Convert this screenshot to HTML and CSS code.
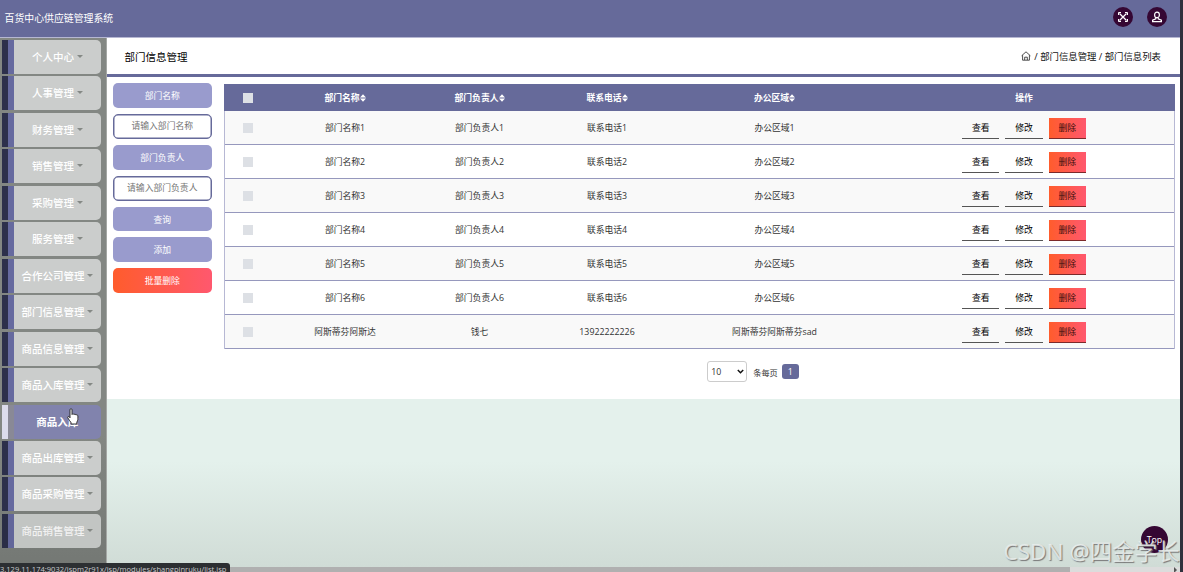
FILE: index.html
```html
<!DOCTYPE html>
<html lang="zh-CN">
<head>
<meta charset="utf-8">
<title>百货中心供应链管理系统</title>
<link rel="stylesheet" href="styles.css">
</head>
<body>
<svg width="0" height="0" class="defs">
  <symbol id="sort" viewBox="0 0 6 8"><path d="M3 .3 6 3.500H0zM3 7.700 0 4.500h6z" fill="#fff"/></symbol>
</svg>
<div class="window">
  <header class="topbar">
    <span class="brand">百货中心供应链管理系统</span>
    <div class="tools">
      <span class="round"><svg width="12" height="12" viewBox="0 0 12 12" fill="none" stroke="#fff" stroke-width="1.300"><path d="M2.500 2.500l7 7M9.500 2.500l-7 7"/><path d="M1.500 4V1.500H4M8 1.500h2.500V4M10.500 8v2.500H8M4 10.500H1.500V8" stroke-width="1"/></svg></span>
      <span class="round"><svg width="12" height="12" viewBox="0 0 12 12" fill="none" stroke="#fff" stroke-width="1.200"><ellipse cx="6" cy="3.900" rx="2.400" ry="2.800"/><path d="M4.800 6.500v1.300L1.600 9.200v1.400h8.800V9.200L7.200 7.800V6.500"/></svg></span>
    </div>
  </header>
  <div class="body">
    <nav class="sidebar">
      <a class="item"><span>个人中心</span><i class="caret"></i></a>
      <a class="item"><span>人事管理</span><i class="caret"></i></a>
      <a class="item"><span>财务管理</span><i class="caret"></i></a>
      <a class="item"><span>销售管理</span><i class="caret"></i></a>
      <a class="item"><span>采购管理</span><i class="caret"></i></a>
      <a class="item"><span>服务管理</span><i class="caret"></i></a>
      <a class="item"><span>合作公司管理</span><i class="caret"></i></a>
      <a class="item"><span>部门信息管理</span><i class="caret"></i></a>
      <a class="item"><span>商品信息管理</span><i class="caret"></i></a>
      <a class="item"><span>商品入库管理</span><i class="caret"></i></a>
      <a class="item active"><span>商品入库</span></a>
      <a class="item"><span>商品出库管理</span><i class="caret"></i></a>
      <a class="item"><span>商品采购管理</span><i class="caret"></i></a>
      <a class="item"><span>商品销售管理</span><i class="caret"></i></a>
    </nav>
    <main class="main">
      <div class="titlebar">
        <h1>部门信息管理</h1>
        <div class="crumbs"><svg width="10" height="10" viewBox="0 0 10 10" fill="none" stroke="#222" stroke-width=".8"><path d="M.6 4.8 5 .8l4.4 4M1.6 4.2v5h6.8v-5M3.7 9V6.2h2.6V9"/></svg><span>/ 部门信息管理 / 部门信息列表</span></div>
      </div>
      <div class="panel">
        <form class="filters">
          <label class="btn">部门名称</label>
          <input class="field" placeholder="请输入部门名称">
          <label class="btn">部门负责人</label>
          <input class="field" placeholder="请输入部门负责人">
          <span class="btn">查询</span>
          <span class="btn">添加</span>
          <span class="btn danger">批量删除</span>
        </form>
        <div class="content">
          <div class="table">
            <div class="row head"><i class="box"></i><b>部门名称<svg><use href="#sort"/></svg></b><b>部门负责人<svg><use href="#sort"/></svg></b><b>联系电话<svg><use href="#sort"/></svg></b><b>办公区域<svg><use href="#sort"/></svg></b><b>操作</b></div>
            <div class="row"><i class="box"></i><span>部门名称1</span><span>部门负责人1</span><span>联系电话1</span><span>办公区域1</span><div class="ops"><a>查看</a><a>修改</a><a class="del">删除</a></div></div>
            <div class="row"><i class="box"></i><span>部门名称2</span><span>部门负责人2</span><span>联系电话2</span><span>办公区域2</span><div class="ops"><a>查看</a><a>修改</a><a class="del">删除</a></div></div>
            <div class="row"><i class="box"></i><span>部门名称3</span><span>部门负责人3</span><span>联系电话3</span><span>办公区域3</span><div class="ops"><a>查看</a><a>修改</a><a class="del">删除</a></div></div>
            <div class="row"><i class="box"></i><span>部门名称4</span><span>部门负责人4</span><span>联系电话4</span><span>办公区域4</span><div class="ops"><a>查看</a><a>修改</a><a class="del">删除</a></div></div>
            <div class="row"><i class="box"></i><span>部门名称5</span><span>部门负责人5</span><span>联系电话5</span><span>办公区域5</span><div class="ops"><a>查看</a><a>修改</a><a class="del">删除</a></div></div>
            <div class="row"><i class="box"></i><span>部门名称6</span><span>部门负责人6</span><span>联系电话6</span><span>办公区域6</span><div class="ops"><a>查看</a><a>修改</a><a class="del">删除</a></div></div>
            <div class="row"><i class="box"></i><span>阿斯蒂芬阿斯达</span><span>钱七</span><span>13922222226</span><span>阿斯蒂芬阿斯蒂芬sad</span><div class="ops"><a>查看</a><a>修改</a><a class="del">删除</a></div></div>
          </div>
          <div class="pager">
            <span class="select">10<svg width="7" height="5" viewBox="0 0 7 5"><path d="M.8 1 3.5 3.7 6.2 1" fill="none" stroke="#111" stroke-width="1.5"/></svg></span>
            <span class="per">条每页</span><span class="page">1</span>
          </div>
        </div>
      </div>
    </main>
  </div>
  <div class="scroll"><div class="thumb"></div><i class="arrow"></i></div>
</div>
<div class="top">Top</div>
<div class="watermark">CSDN @四金学长</div>
<div class="status"><span>3.129.11.174:9032/jspm2r91x/jsp/modules/shangpinruku/list.jsp</span></div>
<svg class="cursor" width="12" height="17" viewBox="0 0 12 17"><path d="M3 1.800c0-1.500 2-1.500 2 0v4.700c.4-.9 1.800-.8 2 .1.400-.6 1.700-.5 1.900.4.600-.5 2-.2 2 1v3.300c0 1-.8 2-1.100 3V16H4v-1.500C3 13 1.600 11.500.8 9.800c-.6-1.200.7-1.800 1.500-.9l.7.9z" fill="#fff" stroke="#222" stroke-width=".9"/></svg>
</body>
</html>
```
FILE: styles.css
```css
* { box-sizing: border-box; }
body {
  margin: 0;
  width: 1183px;
  height: 572px;
  overflow: hidden;
  position: relative;
  background: #30313c;
  font-family: "Open Sans", "Noto Sans CJK SC", sans-serif;
  font-size: 8.8px;
  color: #333;
}
.defs { position: absolute; }
.window { width: 1180px; height: 572px; display: flex; flex-direction: column; }
.topbar {
  height: 38px;
  flex: none;
  display: flex;
  align-items: center;
  justify-content: space-between;
  padding: 0 13px 3px 4.500px;
  background: #666a9a;
  border-bottom: 1px solid #b6b7d2;
}
.brand { color: #fff; font-size: 9.9px; white-space: nowrap; padding-top: 1px; }
.tools { display: flex; gap: 14px; }
.round {
  width: 20px;
  height: 20px;
  border-radius: 50%;
  background: #350733;
  display: grid;
  place-items: center;
}
.body { flex: 1; min-height: 0; display: flex; }
.sidebar {
  width: 107px;
  flex: none;
  padding: 2px 5.500px 0 2px;
  display: flex;
  flex-direction: column;
  gap: 2.460px;
  background: linear-gradient(#838783 0, #838783 75%, #747874 100%);
  border-right: 1px solid #a4a7a4;
}
.item {
  height: 34px;
  flex: none;
  display: flex;
  align-items: center;
  justify-content: center;
  gap: 2.500px;
  padding: 0 0 1px 12px;
  border-radius: 0 5px 5px 0;
  background: linear-gradient(90deg, #2d304b 6px, #666a9f 6px 12px, #cbcdcc 12px);
  color: #fff;
  font-size: 10.500px;
  font-weight: 500;
  white-space: nowrap;
}
.item:last-child { background: linear-gradient(90deg, #2a2d46 6px, #62669a 6px 12px, #c2c5c3 12px); color: #f2f2f2; }
.item.active { background: linear-gradient(90deg, #dcdcec 6px, #898996 6px 12px, #8183ad 12px); font-weight: 700; }
.caret { border: 3px solid transparent; border-top-color: #858985; border-bottom: 0; }
.main {
  flex: 1;
  min-width: 0;
  background: linear-gradient(#e4f1ec 0, #e4f1ec 80%, #d0dcd6 100%);
}
.titlebar {
  height: 39px;
  display: flex;
  align-items: center;
  justify-content: space-between;
  padding: 0 19px 0 17.500px;
  background: #fff;
  border-bottom: 3px solid #666a9a;
}
.titlebar h1 { margin: 0; font-size: 10.500px; font-weight: 400; color: #000; padding-top: 1px; }
.crumbs { display: flex; align-items: center; gap: 3.500px; font-size: 9.400px; color: #111; }
.panel { height: 322px; display: flex; gap: 12px; padding: 6px 5px 0 6px; background: #fff; }
.filters { width: 99px; flex: none; display: flex; flex-direction: column; gap: 6px; }
.btn, .field {
  width: 98.500px;
  height: 24.900px;
  flex: none;
  border-radius: 5px;
  font: inherit;
  text-align: center;
}
.btn {
  display: flex;
  align-items: center;
  justify-content: center;
  background: #999bcd;
  color: #fff;
}
.field { padding: 0; border: 1.500px solid #666a9a; background: #fff; box-shadow: inset 0 0 0 .5px #666a9a; }
.field::placeholder { color: #757575; }
.danger { background: linear-gradient(90deg, #ff5c2c, #ff586e); }
.content { flex: 1; padding-top: 1px; }
.table { border: solid #b7b8d4; border-width: 0 1px; }
.row {
  display: grid;
  grid-template-columns: 46px 148px 121px 134px 201px 298px;
  height: 34px;
  align-items: center;
  justify-items: center;
  border-bottom: 1px solid #9698bd;
  white-space: nowrap;
}
.row:nth-child(even) { background: #f9f9f9; }
.row.head { height: 27px; margin: 0 -1px; padding-left: 1px; background: #666a9a; border: 0; color: #fff; }
.row b { display: flex; align-items: center; }
.row b svg { width: 6px; height: 8px; }
.box { width: 10px; height: 10px; background: #dde0e5; }
.ops { display: flex; gap: 6px; padding-top: 1px; }
.ops a {
  width: 37.200px;
  height: 21px;
  display: grid;
  place-items: center;
  border-bottom: 1px solid #555;
  color: #000;
}
.ops .del { background: linear-gradient(90deg, #ff5c2c, #ff586e); border-color: #7c2a2a; color: #3a0c0c; }
.pager { display: flex; align-items: center; justify-content: center; padding: 12px 0 0 107px; }
.select {
  width: 40px;
  height: 21px;
  display: flex;
  align-items: center;
  justify-content: space-between;
  padding: 0 2.500px 0 3px;
  border: 1px solid #ccc;
  border-radius: 3px;
}
.per { margin: 0 4px 0 6px; font-size: 8.200px; }
.page {
  width: 17px;
  height: 15px;
  display: grid;
  place-items: center;
  border-radius: 3px;
  background: #666a9a;
  color: #fff;
}
.scroll { height: 5px; flex: none; display: flex; justify-content: space-between; align-items: center; background: #dcdcdc; }
.thumb { width: 1070px; height: 5px; background: #b0b0b0; }
.arrow { border: 3px solid transparent; border-left-color: #555; border-right: 0; margin-right: 3px; }
.top {
  position: absolute;
  left: 1141px;
  top: 526px;
  width: 27px;
  height: 27px;
  border-radius: 50%;
  background: #350733;
  color: #fff;
  text-align: center;
  line-height: 29px;
}
.watermark {
  position: absolute;
  left: 1003.500px;
  top: 537px;
  font-family: "Noto Sans", "Noto Sans CJK SC", sans-serif;
  font-size: 22.500px;
  line-height: 30px;
  color: rgba(235, 240, 238, .85);
  text-shadow: 1px 1px 1px #777;
  white-space: nowrap;
}
.status {
  position: absolute;
  left: 0;
  top: 563px;
  width: 230px;
  height: 9px;
  overflow: hidden;
  border-radius: 0 3px 0 0;
  background: #2c2f32;
  color: #c8cacc;
  font-size: 7.550px;
  line-height: 13px;
  white-space: nowrap;
}
.cursor { position: absolute; left: 67px; top: 408px; }
```
